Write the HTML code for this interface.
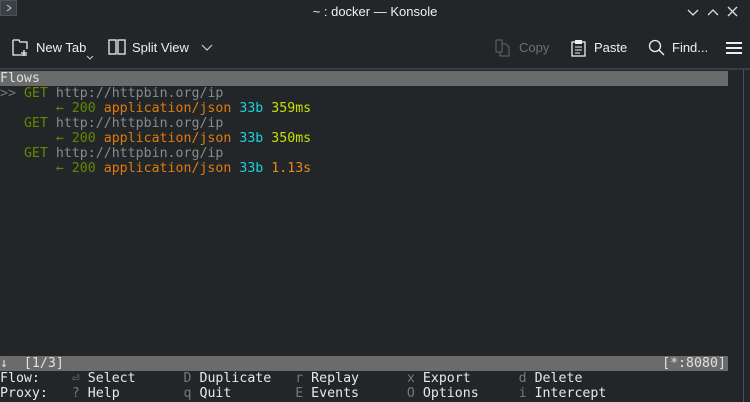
<!DOCTYPE html>
<html><head><style>
body{margin:0;width:750px;height:402px;background:#232629;overflow:hidden;position:relative;font-family:"Liberation Sans","DejaVu Sans",sans-serif;color:#eff0f1}
.title{position:absolute;top:0;left:0;width:750px;height:23px;background:#232629;}
.title .t{position:absolute;left:0;width:750px;text-align:center;top:4px;font-size:13px;color:#eff0f1}
.tb{position:absolute;top:0;left:0;width:17px;height:16px;background:#3b4045;border:1px solid #4d5257;box-sizing:border-box}
.tool{position:absolute;top:40px;font-size:13px;color:#eff0f1}
.sep{position:absolute;top:68px;left:0;width:750px;height:2px;background:#3a3e42}
.term{position:absolute;top:71px;left:0;font-family:"DejaVu Sans Mono","Liberation Mono",monospace;font-size:13.25px;line-height:15px;white-space:pre;color:#9a9a9a}
.bar{background:#6b6b6b;color:#e0e0e0;width:728px;display:block;overflow:hidden}
.g{color:#5f8a00}.u{color:#8a8a8a}.o{color:#e07b0c}.c{color:#1ad4dc}.y{color:#c6e000}.w{color:#e8e8e8}.k{color:#777}
.sb{position:absolute;left:743px;top:70px;width:7px;height:332px;border-left:1px solid #4a4e52;box-sizing:border-box}
</style></head><body>
<div class="title"><div class="tb"><svg width="15" height="14"><path d="M6 4l4 3-4 3" stroke="#ccc" fill="none"/></svg></div>
<div class="t">~ : docker — Konsole</div>
<svg style="position:absolute;left:686px;top:5px" width="60" height="14"><path d="M2 5l5 5 5-5M22 10l5-5 5 5M42 2l9 9M51 2l-9 9" stroke="#ddd" stroke-width="1.3" fill="none"/></svg></div>
<svg style="position:absolute;left:12px;top:39px" width="20" height="18"><path d="M1 1h6l1 2h7v7M15 16H1V1" stroke="#eee" fill="none" stroke-width="1.3"/><path d="M12 11v6M9 14h6" stroke="#eee" stroke-width="1.3"/></svg>
<div class="tool" style="left:36px">New Tab</div>
<svg style="position:absolute;left:86px;top:55px" width="8" height="6"><path d="M1 1l3 3 3-3" stroke="#ccc" fill="none"/></svg>
<svg style="position:absolute;left:108px;top:39px" width="18" height="17"><rect x="1" y="1" width="7" height="14" stroke="#eee" fill="none" stroke-width="1.3"/><rect x="10" y="1" width="7" height="14" stroke="#eee" fill="none" stroke-width="1.3"/></svg>
<div class="tool" style="left:132px">Split View</div>
<svg style="position:absolute;left:201px;top:44px" width="12" height="8"><path d="M1 1l5 5 5-5" stroke="#ccc" fill="none" stroke-width="1.2"/></svg>
<svg style="position:absolute;left:495px;top:39px" width="16" height="18"><path d="M1 1h6v12H1zM7 5h4l3 3v9H5v-4" stroke="#666" fill="none"/></svg>
<div class="tool" style="left:519px;color:#6e7175">Copy</div>
<svg style="position:absolute;left:571px;top:39px" width="16" height="18"><rect x="1" y="3" width="13" height="14" stroke="#eee" fill="none" stroke-width="1.3"/><rect x="4" y="1" width="7" height="4" fill="#eee"/><path d="M4 8h7M4 11h7M4 14h5" stroke="#eee"/></svg>
<div class="tool" style="left:594px">Paste</div>
<svg style="position:absolute;left:648px;top:39px" width="18" height="18"><circle cx="7" cy="7" r="5.5" stroke="#eee" fill="none" stroke-width="1.3"/><path d="M11 11l5 5" stroke="#eee" stroke-width="1.4"/></svg>
<div class="tool" style="left:672px">Find...</div>
<svg style="position:absolute;left:726px;top:41px" width="16" height="14"><path d="M0 2h16M0 7h16M0 12h16" stroke="#eee" stroke-width="2"/></svg>
<div class="sep"></div>
<div class="term"><span class="bar">Flows</span><span class="k">&gt;&gt;</span> <span class="g">GET</span> <span class="u">http://httpbin.org/ip</span>
       <span class="g">← 200</span> <span class="o">application/json</span> <span class="c">33b</span> <span class="y">359ms</span>
   <span class="g">GET</span> <span class="u">http://httpbin.org/ip</span>
       <span class="g">← 200</span> <span class="o">application/json</span> <span class="c">33b</span> <span class="y">350ms</span>
   <span class="g">GET</span> <span class="u">http://httpbin.org/ip</span>
       <span class="g">← 200</span> <span class="o">application/json</span> <span class="c">33b</span> <span style="color:#e88a1a">1.13s</span>
</div>
<div class="term" style="top:356px"><span class="bar">↓  [1/3]                                                                           [*:8080]</span><span class="w">Flow:    <span class="k">⏎</span> Select      <span class="k">D</span> Duplicate   <span class="k">r</span> Replay      <span class="k">x</span> Export      <span class="k">d</span> Delete</span>
<span class="w">Proxy:   <span class="k">?</span> Help        <span class="k">q</span> Quit        <span class="k">E</span> Events      <span class="k">O</span> Options     <span class="k">i</span> Intercept</span></div>
<div class="sb"></div>
</body></html>
